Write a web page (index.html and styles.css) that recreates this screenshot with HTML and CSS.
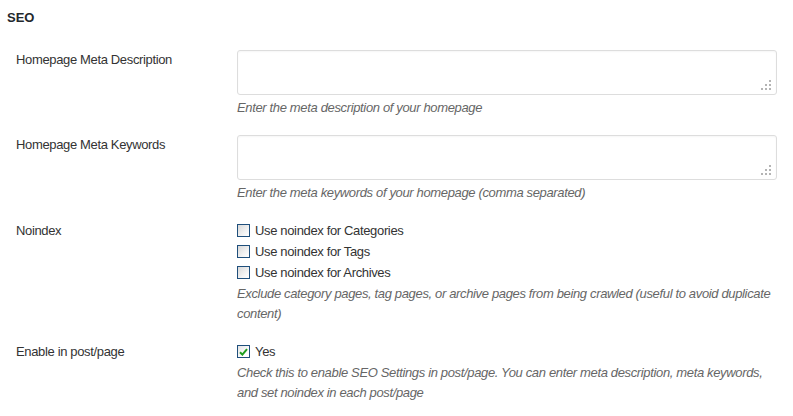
FILE: index.html
```html
<!DOCTYPE html>
<html>
<head>
<meta charset="utf-8">
<link rel="stylesheet" href="styles.css">
</head>
<body>
<div class="page">
  <h2 class="section-title">SEO</h2>

  <div class="row">
    <div class="label">Homepage Meta Description</div>
    <div class="field">
      <div class="textarea-wrap">
        <textarea class="textarea"></textarea>
        <svg class="grip" width="10" height="10" viewBox="0 0 10 10"><rect x="8" y="0" width="2" height="2"/><rect x="4" y="4" width="2" height="2"/><rect x="8" y="4" width="2" height="2"/><rect x="0" y="8" width="2" height="2"/><rect x="4" y="8" width="2" height="2"/><rect x="8" y="8" width="2" height="2"/></svg>
      </div>
      <p class="desc">Enter the meta description of your homepage</p>
    </div>
  </div>

  <div class="row">
    <div class="label">Homepage Meta Keywords</div>
    <div class="field">
      <div class="textarea-wrap">
        <textarea class="textarea"></textarea>
        <svg class="grip" width="10" height="10" viewBox="0 0 10 10"><rect x="8" y="0" width="2" height="2"/><rect x="4" y="4" width="2" height="2"/><rect x="8" y="4" width="2" height="2"/><rect x="0" y="8" width="2" height="2"/><rect x="4" y="8" width="2" height="2"/><rect x="8" y="8" width="2" height="2"/></svg>
      </div>
      <p class="desc">Enter the meta keywords of your homepage (comma separated)</p>
    </div>
  </div>

  <div class="row">
    <div class="label label-check">Noindex</div>
    <div class="field">
      <label class="check"><span class="box"></span><span>Use noindex for Categories</span></label>
      <label class="check"><span class="box"></span><span>Use noindex for Tags</span></label>
      <label class="check"><span class="box"></span><span>Use noindex for Archives</span></label>
      <p class="desc desc-tight">Exclude category pages, tag pages, or archive pages from being crawled (useful to avoid duplicate content)</p>
    </div>
  </div>

  <div class="row">
    <div class="label label-check">Enable in post/page</div>
    <div class="field">
      <label class="check"><span class="box checked"><svg width="9" height="8" viewBox="0 0 9 8"><path d="M1 4.2 L3.4 6.6 L8 1.2" fill="none" stroke="#1f9e1f" stroke-width="2"/></svg></span><span>Yes</span></label>
      <p class="desc desc-tight">Check this to enable SEO Settings in post/page. You can enter meta description, meta keywords, and set noindex in each post/page</p>
    </div>
  </div>
</div>
</body>
</html>
```

FILE: styles.css
```css
* { box-sizing: border-box; }

html, body {
  margin: 0;
  padding: 0;
  background: #ffffff;
}

body {
  font-family: "Liberation Sans", Arial, sans-serif;
  font-size: 13px;
  color: #333333;
  letter-spacing: -0.35px;
}

.page {
  padding: 8px 16px 0 7px;
}

.section-title {
  margin: 0 0 22px 0;
  font-size: 13px;
  line-height: 20px;
  font-weight: bold;
  color: #23282d;
  letter-spacing: 0;
}

.row {
  display: grid;
  grid-template-columns: 221px 1fr;
  padding-left: 9px;
  margin-bottom: 17px;
}

.label {
  padding-top: 1px;
  line-height: 18px;
  color: #333333;
}

.label-check {
  padding-top: 0;
  line-height: 21px;
}

.field {
  display: flex;
  flex-direction: column;
  min-width: 0;
}

.textarea-wrap {
  position: relative;
  height: 45px;
}

.textarea {
  display: block;
  width: 100%;
  height: 45px;
  margin: 0;
  padding: 4px 6px;
  border: 1px solid #dddddd;
  border-radius: 3px;
  box-shadow: inset 0 1px 2px rgba(0, 0, 0, 0.04);
  resize: none;
  font: inherit;
  background: #ffffff;
}

.grip {
  position: absolute;
  right: 6px;
  bottom: 5px;
  fill: #b4b4b4;
}

.desc {
  margin: 3px 0 0 0;
  line-height: 20px;
  font-style: italic;
  color: #666666;
}

.desc-tight {
  margin-top: 1px;
}

.check {
  display: flex;
  align-items: center;
  height: 21px;
  line-height: 21px;
  color: #333333;
}

.box {
  display: flex;
  align-items: center;
  justify-content: center;
  width: 13px;
  height: 13px;
  margin-right: 5px;
  border: 1px solid #1f4f7c;
  background: linear-gradient(135deg, #d8d8d8 0%, #f2f2f2 60%, #ffffff 100%);
  flex: none;
}

.box.checked {
  background: linear-gradient(135deg, #e4e4e4 0%, #ffffff 70%);
}
```
